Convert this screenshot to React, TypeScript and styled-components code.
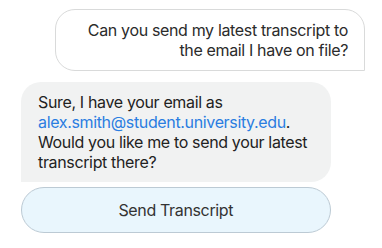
import React from "react";
import styled, { createGlobalStyle } from "styled-components";

const Global = createGlobalStyle`
  html, body { margin: 0; padding: 0; background: #ffffff; }
  body { font-family: Inter, "Noto Sans", sans-serif; }
`;

const Thread = styled.div`
  width: 382px;
  box-sizing: border-box;
  padding: 9px 17px 0 21px;
  display: flex;
  flex-direction: column;
`;

const UserBubble = styled.div`
  align-self: flex-end;
  max-width: 90%;
  box-sizing: border-box;
  padding: 10px 16px;
  background: #ffffff;
  border: 1px solid #d9dada;
  border-radius: 20px 20px 0 20px;
  color: #2b2b2b;
  font-size: 16px;
  letter-spacing: -0.35px;
  line-height: 20px;
  text-align: right;
`;

const BotGroup = styled.div`
  margin-top: 11px;
  display: flex;
  flex-direction: column;
  gap: 5px;
  width: 90%;
`;

const BotBubble = styled.div`
  box-sizing: border-box;
  padding: 10px 16px 10px 17px;
  background: #f1f2f2;
  border-radius: 20px 20px 20px 0;
  color: #222222;
  font-size: 16px;
  letter-spacing: -0.35px;
  line-height: 20px;
`;

const Link = styled.span`
  color: #2a7de1;
`;

const ActionButton = styled.button`
  height: 46px;
  box-sizing: border-box;
  border: 1px solid #bccad4;
  border-radius: 23px;
  background: #e9f6fd;
  color: #333333;
  font-family: Inter, "Noto Sans", sans-serif;
  font-size: 16px;
  letter-spacing: -0.35px;
  cursor: pointer;
`;

export default function App() {
  return (
    <>
      <Global />
      <Thread>
        <UserBubble>
          Can you send my latest transcript to the email I have on file?
        </UserBubble>
        <BotGroup>
          <BotBubble>
            Sure, I have your email as{" "}
            <Link>alex.smith@student.university.edu</Link>. Would you like me
            to send your latest transcript there?
          </BotBubble>
          <ActionButton>Send Transcript</ActionButton>
        </BotGroup>
      </Thread>
    </>
  );
}
